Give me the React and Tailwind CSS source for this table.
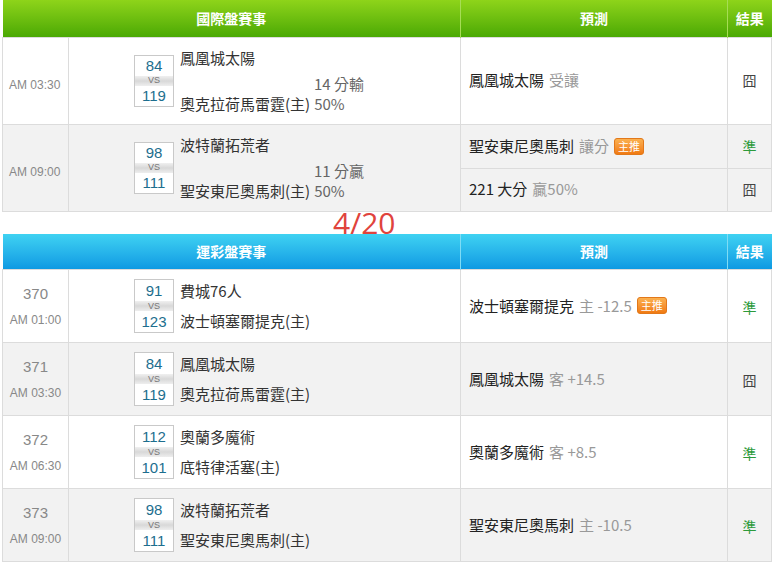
import React from "react";

const FONT = { fontFamily: '"Noto Sans CJK TC", "Noto Sans", sans-serif' };

function Badge() {
  return (
    <span className="ml-[5px] inline-flex h-[17px] items-center rounded-[3px] border border-[#e2781a] bg-gradient-to-b from-[#fbb04e] to-[#f07a10] px-[3px] text-[11px] leading-none text-white align-[2px]">
      主推
    </span>
  );
}

function ScoreBox({ a, b, big }) {
  const cell = big ? "h-[21px]" : "h-[20px]";
  return (
    <div className="flex w-[40px] flex-col border border-[#c9c9c9] bg-white text-center text-[15px] text-[#1d6e8e]" style={{ fontFamily: '"Liberation Sans", sans-serif' }}>
      <div className={`${cell} flex items-center justify-center overflow-hidden leading-none`}>{a}</div>
      <div className="flex h-[10px] items-center justify-center overflow-hidden bg-gradient-to-b from-[#f0f0f0] via-[#d8d8d8] to-[#eeeeee] text-[9px] leading-none text-[#777]">
        VS
      </div>
      <div className={`${cell} flex items-center justify-center overflow-hidden leading-none`}>{b}</div>
    </div>
  );
}

const Res = ({ v }) =>
  v === "準" ? (
    <span className="text-[14px] text-[#2c9a3a]">準</span>
  ) : (
    <span className="text-[14px] text-[#444]">囧</span>
  );

function IntlRow({ time, away, home, pts, pct, bg, preds, tpad }) {
  return (
    <tr className={bg}>
      <td className={`border border-[#dcdcdc] pl-[6px] ${tpad} text-[12px] text-[#888]`} style={{ fontFamily: '"Liberation Sans", sans-serif' }}>
        {time}
      </td>
      <td className="border border-[#dcdcdc] p-0">
        <div className="relative flex h-[86px] items-center pl-[65px]">
          <ScoreBox a={away[0]} b={home[0]} />
          <div className="ml-[6px] flex h-[66px] flex-col justify-between text-[15px] leading-[20px] text-[#333]">
            <div>{away[1]}</div>
            <div>
              {home[1]}
              <span className="ml-[4px] text-[#666]">{pct}</span>
            </div>
          </div>
          <div className="absolute left-[245px] top-[36px] text-[15px] leading-[20px] text-[#666]">{pts}</div>
        </div>
      </td>
      <td className="border border-[#dcdcdc] p-0" colSpan={2}>
        {preds.map((p, i) => (
          <div key={i} className={`flex ${preds.length === 1 ? "h-[86px]" : "h-[43px]"} ${i > 0 ? "border-t border-[#dcdcdc]" : ""}`}>
            <div className="flex flex-1 items-center pl-[8px] text-[15px] text-[#222]">{p.t}</div>
            <div className="flex w-[44px] items-center justify-center border-l border-[#dcdcdc]">
              <Res v={p.r} />
            </div>
          </div>
        ))}
      </td>
    </tr>
  );
}

function LotRow({ no, time, away, home, pred, res, bg }) {
  return (
    <tr className={`${bg} h-[73px]`}>
      <td className="border border-[#dcdcdc] text-center text-[#888]" style={{ fontFamily: '"Liberation Sans", sans-serif' }}>
        <div className="text-[15px] leading-[18px]">{no}</div>
        <div className="mt-[10px] text-[12px] leading-[14px]">{time}</div>
      </td>
      <td className="border border-[#dcdcdc] p-0">
        <div className="flex items-center pl-[65px]">
          <ScoreBox a={away[0]} b={home[0]} big />
          <div className="ml-[6px] flex h-[50px] flex-col justify-between text-[15px] leading-[20px] text-[#333]">
            <div>{away[1]}</div>
            <div>{home[1]}</div>
          </div>
        </div>
      </td>
      <td className="border border-[#dcdcdc] pl-[8px] text-[15px] text-[#222]">{pred}</td>
      <td className="border border-[#dcdcdc] text-center">
        <Res v={res} />
      </td>
    </tr>
  );
}

function Cols() {
  return (
    <colgroup>
      <col style={{ width: 66 }} />
      <col style={{ width: 392 }} />
      <col style={{ width: 267 }} />
      <col style={{ width: 44 }} />
    </colgroup>
  );
}

const g = (s) => <span className="ml-[5px] text-[#999]">{s}</span>;

export default function App() {
  return (
    <div className="w-[773px] bg-white pl-[2px]" style={FONT}>
      <table className="w-[770px] table-fixed border-collapse">
        <Cols />
        <thead>
          <tr className="h-[37px] bg-gradient-to-b from-[#8ed41a] to-[#4aa904] text-[14px] font-bold text-white">
            <th colSpan={2} className="border-r border-[#a6dd55]">國際盤賽事</th>
            <th className="border-r border-[#a6dd55]">預測</th>
            <th>結果</th>
          </tr>
        </thead>
        <tbody>
          <IntlRow
            time="AM 03:30"
            tpad="pt-[8px]"
            away={["84", "鳳凰城太陽"]}
            home={["119", "奧克拉荷馬雷霆(主)"]}
            pts="14 分輸"
            pct="50%"
            bg="bg-white"
            preds={[{ t: <>鳳凰城太陽{g("受讓")}</>, r: "囧" }]}
          />
          <IntlRow
            time="AM 09:00"
            tpad="pt-[9px]"
            away={["98", "波特蘭拓荒者"]}
            home={["111", "聖安東尼奧馬刺(主)"]}
            pts="11 分贏"
            pct="50%"
            bg="bg-[#f2f2f2]"
            preds={[
              { t: <>聖安東尼奧馬刺{g("讓分")}<Badge /></>, r: "準" },
              { t: <>221 大分{g("贏50%")}</>, r: "囧" },
            ]}
          />
        </tbody>
      </table>

      <div className="h-[22px] pl-[331px] text-[30px] leading-[22px] text-[#e0433c]" style={{ fontFamily: '"Open Sans", "Noto Sans", sans-serif' }}>
        4/20
      </div>

      <table className="w-[770px] table-fixed border-collapse">
        <Cols />
        <thead>
          <tr className="h-[36px] bg-gradient-to-b from-[#3fd2f2] to-[#0b98e2] text-[14px] font-bold text-white">
            <th colSpan={2} className="border-r border-[#7fdcf5]">運彩盤賽事</th>
            <th className="border-r border-[#7fdcf5]">預測</th>
            <th>結果</th>
          </tr>
        </thead>
        <tbody>
          <LotRow no="370" time="AM 01:00" away={["91", "費城76人"]} home={["123", "波士頓塞爾提克(主)"]} pred={<>波士頓塞爾提克{g("主 -12.5")}<Badge /></>} res="準" bg="bg-white" />
          <LotRow no="371" time="AM 03:30" away={["84", "鳳凰城太陽"]} home={["119", "奧克拉荷馬雷霆(主)"]} pred={<>鳳凰城太陽{g("客 +14.5")}</>} res="囧" bg="bg-[#f2f2f2]" />
          <LotRow no="372" time="AM 06:30" away={["112", "奧蘭多魔術"]} home={["101", "底特律活塞(主)"]} pred={<>奧蘭多魔術{g("客 +8.5")}</>} res="準" bg="bg-white" />
          <LotRow no="373" time="AM 09:00" away={["98", "波特蘭拓荒者"]} home={["111", "聖安東尼奧馬刺(主)"]} pred={<>聖安東尼奧馬刺{g("主 -10.5")}</>} res="準" bg="bg-[#f2f2f2]" />
        </tbody>
      </table>
    </div>
  );
}
